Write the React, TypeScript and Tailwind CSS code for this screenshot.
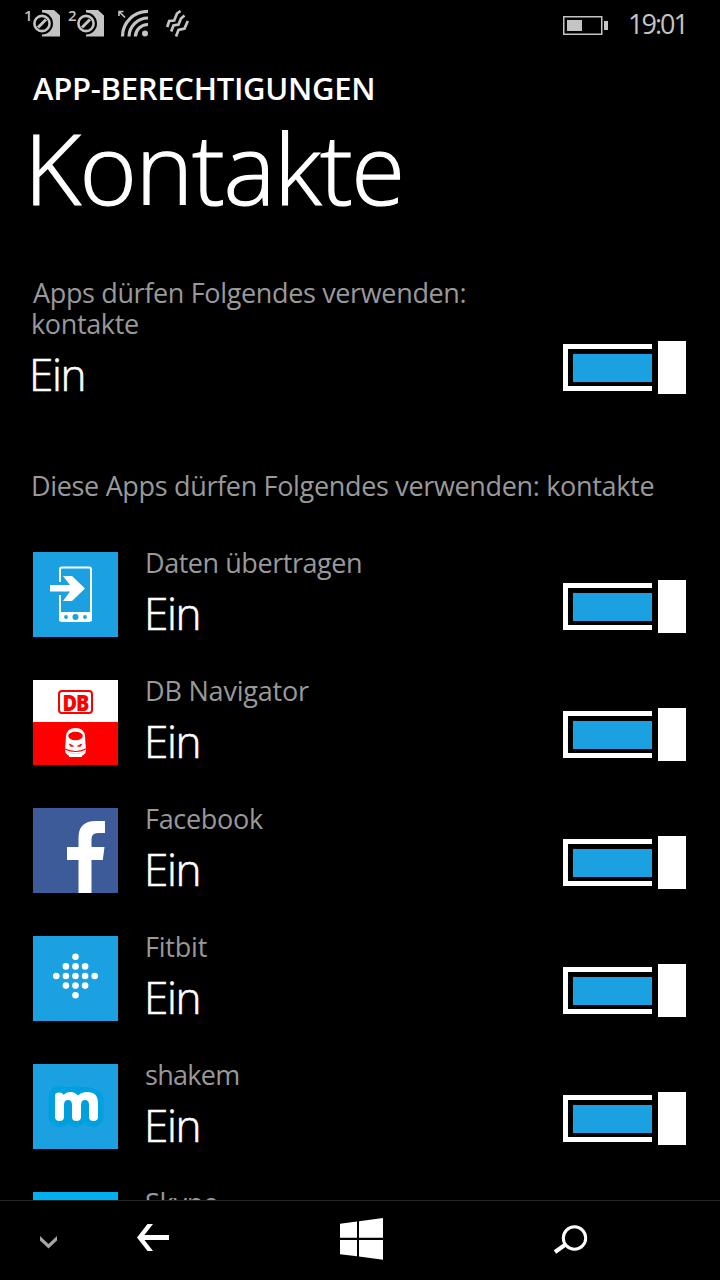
import type { ReactNode } from "react";

function Toggle() {
  return (
    <div role="switch" aria-checked="true" className="flex shrink-0 items-center gap-1.5">
      <div className="h-[47px] w-[89px] border-[5px] border-r-0 border-white pt-[5px] pb-1 pl-[5px]">
        <div className="h-full bg-[#1ba1e2]" />
      </div>
      <div className="h-[53px] w-7 bg-white" />
    </div>
  );
}

function SimIcon({ slot }: { slot: string }) {
  return (
    <div className="flex h-7 w-9">
      <span className="w-[9px] text-[15px] leading-[11px] font-semibold">{slot}</span>
      <svg width="27" height="28" viewBox="0 0 27 28">
        <path d="M9 0h12l6 5.500V26.500H9z" fill="#c4c4c4" />
        <circle cx="9" cy="13.500" r="11" fill="#000" />
        <circle cx="9" cy="13.500" r="7.600" fill="none" stroke="#c4c4c4" strokeWidth="2.6" />
        <path d="M5 17.500 13 9.500" stroke="#c4c4c4" strokeWidth="3" />
      </svg>
    </div>
  );
}

function StatusBar() {
  return (
    <header className="flex h-12 items-center pr-[33px] pl-6 text-[#c4c4c4]">
      <div className="flex h-7 gap-2">
        <SimIcon slot="1" />
        <SimIcon slot="2" />
      </div>
      {/* Wi-Fi */}
      <svg className="ml-[13px]" width="32" height="28" viewBox="0 0 32 28" fill="none" stroke="currentColor">
        <path d="M2 6V1.500h4.500M2 1.500l6 6" strokeWidth="1.6" />
        <path d="M5.500 26.500A25 25 0 0 1 31 1.500M12 26.500A19 19 0 0 1 31 8M18.400 26.500A12.500 12.500 0 0 1 31 14.500" strokeWidth="3.2" />
        <circle cx="28" cy="23.500" r="3" fill="currentColor" stroke="none" />
      </svg>
      {/* Vibration */}
      <svg className="ml-4" width="26" height="28" viewBox="0 0 26 28" fill="none" stroke="currentColor" strokeWidth="2.7">
        <path d="M2.200 17 4.200 11 9.200 10.500 12 3.500 15.500 1" />
        <path d="M6.200 21.500 8.500 15.500 13.500 14.500 16 8.500 19.500 5.500" />
        <path d="M11 26.500 13.500 20 19.500 18.500 22.800 11" />
      </svg>
      {/* Battery */}
      <svg className="ml-auto mt-0.5" width="45" height="19" viewBox="0 0 45 19" fill="none">
        <rect x="0.75" y="0.75" width="38" height="17.5" stroke="currentColor" strokeWidth="1.5" />
        <path d="M4 4h15v11H4zM41 5h4v9h-4z" fill="currentColor" />
      </svg>
      <span className="-mt-0.5 ml-5 w-[59px] text-[27px] leading-none tracking-[-2px] whitespace-nowrap">19:01</span>
    </header>
  );
}

function PhoneTile() {
  return (
    <svg width="85" height="85" viewBox="0 0 85 85" fill="none">
      <path d="M0 0h85v85H0z" fill="#1ba1e2" />
      <path d="M27 30V17.500q0-2 2-2h27q2 0 2 2V67q0 2-2 2H29q-2 0-2-2V43" stroke="#fff" strokeWidth="2" />
      <path d="M26 60h33v9H26z" fill="#fff" />
      <path d="M17 33h20l-7-9h9l13 12.500L39 49h-9l7-9.500H17z" fill="#fff" />
      <circle cx="33" cy="65" r="1.900" fill="#1ba1e2" />
      <circle cx="42.500" cy="65" r="3" fill="#1ba1e2" />
      <circle cx="52" cy="65" r="1.900" fill="#1ba1e2" />
    </svg>
  );
}

function DbTile() {
  return (
    <div className="flex h-full flex-col">
      <div className="flex h-[42px] items-center justify-center bg-white pt-[2px]">
        <div className="flex h-6 w-[35px] items-center justify-center rounded-[4px] border-[2.5px] border-[#f00] text-[#f00]">
          <span className="scale-x-90 text-[22px] leading-none font-extrabold tracking-[-1px]">DB</span>
        </div>
      </div>
      <svg width="85" height="43" viewBox="0 0 85 43">
        <path d="M0 0h85v43H0z" fill="#f00" />
        <path d="M33 14q1-8 9.500-8T52 14l1 15q-10 6-21 0z" fill="#fff" />
        <path d="M32.500 29q10 6 20 0v2q-2 2.500-5 3.500H37.500q-3-1-5-3.500z" fill="#fff" />
        <ellipse cx="42.500" cy="14" rx="7.300" ry="4.200" fill="#f00" />
        <path d="M32 27q10.500 5 21 0" fill="none" stroke="#f00" strokeWidth="1.200" />
        <path d="M36.500 22l4 2.200h-3zM48.500 22l-4 2.200h3z" fill="#f00" stroke="#f00" strokeWidth="0.800" />
        <path d="M36 33h13v2H36z" fill="#fff" />
      </svg>
    </div>
  );
}

function FacebookTile() {
  return (
    <svg width="85" height="85" viewBox="0 0 85 85">
      <path d="M0 0h85v85H0z" fill="#3e5b99" />
      <path d="M45.500 85V52H34V39h11.500V30q0-17 17-17H72v12h-7q-6.500 0-6.500 6v8H71.500l-1.700 13H58.500v33z" fill="#fff" />
    </svg>
  );
}

const fitbitDots = [
  [0, -2],
  [-1, -1], [0, -1], [1, -1],
  [-2, 0], [-1, 0], [0, 0], [1, 0], [2, 0],
  [-1, 1], [0, 1], [1, 1],
  [0, 2],
];

function FitbitTile() {
  return (
    <svg width="85" height="85" viewBox="0 0 85 85">
      <path d="M0 0h85v85H0z" fill="#1ba1e2" />
      {fitbitDots.map(([x, y]) => (
        <circle key={`${x},${y}`} cx={42.5 + x * 9.6} cy={40 + y * 9.6} r="3.3" fill="#fff" />
      ))}
    </svg>
  );
}

function ShakemTile() {
  return (
    <svg width="85" height="85" viewBox="0 0 85 85" fill="none" strokeLinecap="round" strokeLinejoin="round">
      <path d="M0 0h85v85H0z" fill="#1ba1e2" />
      <path d="M26.500 33v19M42.500 33v19M59.500 36v16M32 34h22" stroke="#00a0de" strokeWidth="22" />
      <path
        d="M22 31.500Q22 28.500 26 28.500T30.500 31Q33 28 37.500 28T45 31.500Q48.500 28 54 28 65 28 65 39V53Q65 57 60.500 57T56 53V41Q56 36 52 36T48 41V53Q48 57 43.500 57T39 53V41Q39 36 35 36T31 41V53Q31 57 26.500 57T22 53z"
        fill="#fff"
      />
    </svg>
  );
}

interface AppPermission {
  name: string;
  tile: ReactNode;
  nameClass: string;
}

const apps: AppPermission[] = [
  { name: "Daten übertragen", tile: <PhoneTile />, nameClass: "tracking-[-0.45px]" },
  { name: "DB Navigator", tile: <DbTile />, nameClass: "tracking-[-0.2px]" },
  { name: "Facebook", tile: <FacebookTile />, nameClass: "tracking-[-0.3px]" },
  { name: "Fitbit", tile: <FitbitTile />, nameClass: "tracking-[-0.2px]" },
  { name: "shakem", tile: <ShakemTile />, nameClass: "tracking-[-0.7px]" },
  { name: "Skype", tile: <div className="h-full bg-[#00aff0]" />, nameClass: "tracking-[-0.2px]" },
];

function AppRow({ app }: { app: AppPermission }) {
  return (
    <li className="flex h-32 pr-[34px] pl-[33px]">
      <div className="size-[85px] shrink-0">{app.tile}</div>
      <div className="ml-[27px] flex-1 whitespace-nowrap">
        <div className={`-mt-[5px] text-[27px] leading-[31px] text-[#999] ${app.nameClass}`}>{app.name}</div>
        <div className="mt-2 -ml-px text-[44px] leading-[54px] font-light tracking-[-1.4px] [-webkit-text-stroke:0.6px_white]">
          Ein
        </div>
      </div>
      <div className="pt-7">
        <Toggle />
      </div>
    </li>
  );
}

function NavBar() {
  return (
    <nav className="flex h-20 shrink-0 items-start border-t border-[#262626] bg-black">
      <svg className="mt-[35px] ml-10" width="17" height="13" viewBox="0 0 17 13" fill="#a6a6a6">
        <path d="M0 0 8.500 8 17 0V4.500L8.500 12.500 0 4.500z" />
      </svg>
      <svg className="mt-[23px] ml-[80px]" width="32" height="27" viewBox="0 0 32 27" fill="#fff">
        <path d="M10.500 0H16L7.500 11H32v5H7.500L16 27h-5.500L0 13.500z" />
      </svg>
      <svg className="mt-[17px] ml-[171px]" width="43" height="42" viewBox="0 0 43 42" fill="#fff">
        <path d="M0 5.700 17 3.500V19.700H0zM19 3.200 43 0V19.700H19zM0 22H17V38.300L0 36.200zM19 22H43V41.800L19 38.600z" />
      </svg>
      <svg className="mt-6 ml-[170px]" width="35" height="29" viewBox="0 0 35 29" fill="none" stroke="#fff">
        <circle cx="21.500" cy="13" r="11.200" strokeWidth="3" />
        <path d="M12.500 19.500 2 27" strokeWidth="4" />
      </svg>
    </nav>
  );
}

export default function App() {
  return (
    <div className="flex h-[1280px] w-[720px] flex-col overflow-hidden bg-black font-['Open_Sans','Noto_Sans',sans-serif] text-white">
      <StatusBar />
      <main className="min-h-0 flex-1 overflow-hidden">
        <h2 className="mt-5 ml-[33px] text-[31px] leading-10 font-semibold tracking-[-0.27px] whitespace-nowrap">
          APP-BERECHTIGUNGEN
        </h2>
        <h1 className="mt-[9px] ml-6 text-[98px] leading-[100px] font-light tracking-[-1.4px] whitespace-nowrap [-webkit-text-stroke:1.2px_white]">
          Kontakte
        </h1>

        <section className="mt-[60px] flex h-[118px] justify-between pr-[34px] pl-[31px]">
          <div className="whitespace-nowrap">
            <p className="text-[27px] leading-[31px] tracking-[-0.35px] text-[#999]">
              <span className="ml-0.5">Apps dürfen Folgendes verwenden:</span>
              <br />
              kontakte
            </p>
            <p className="mt-2 -ml-0.5 text-[44px] leading-[54px] font-light tracking-[-1.4px] [-webkit-text-stroke:0.6px_white]">
              Ein
            </p>
          </div>
          <div className="pt-[64px]">
            <Toggle />
          </div>
        </section>

        <p className="mt-[75px] ml-[31px] text-[27px] leading-[31px] tracking-[-0.33px] whitespace-nowrap text-[#999]">
          Diese Apps dürfen Folgendes verwenden: kontakte
        </p>

        <ul className="mt-[51px]">
          {apps.map((app) => (
            <AppRow key={app.name} app={app} />
          ))}
        </ul>
      </main>
      <NavBar />
    </div>
  );
}
